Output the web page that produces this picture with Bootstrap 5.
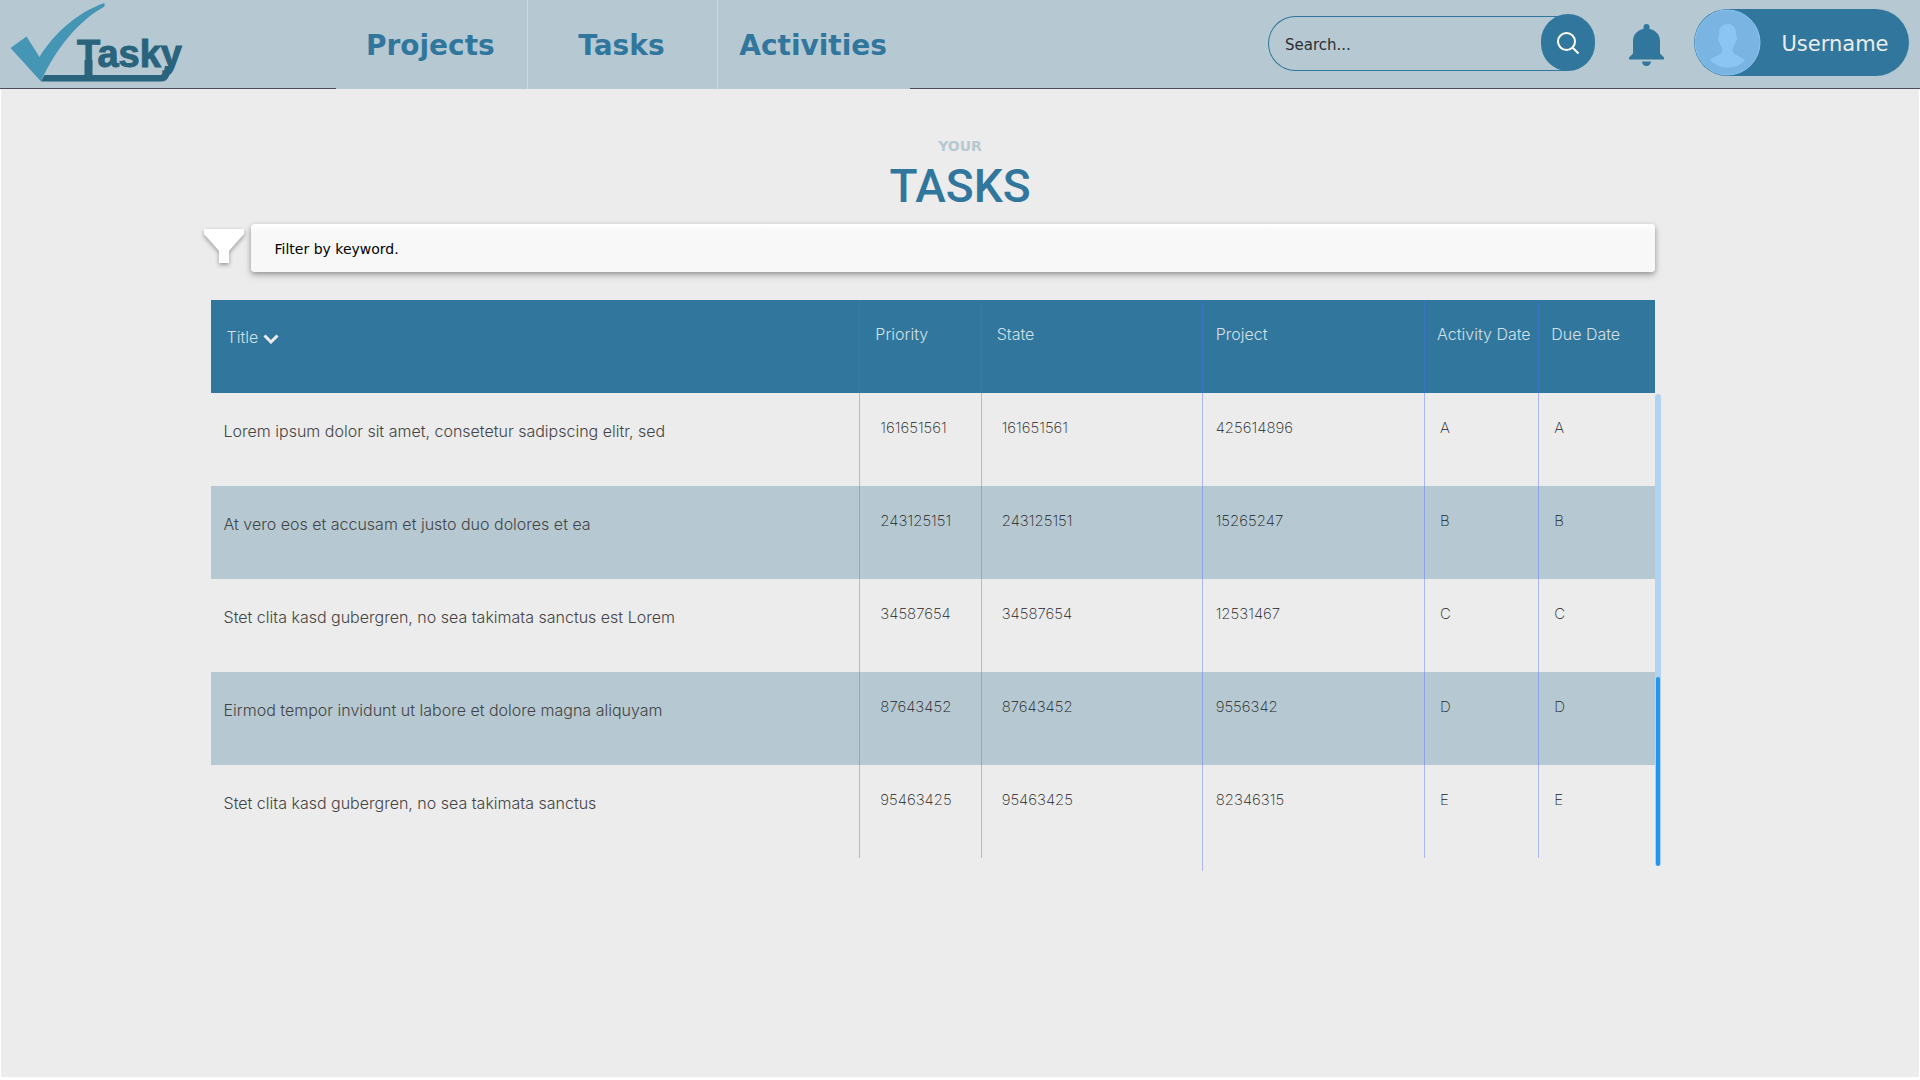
<!DOCTYPE html>
<html lang="en">
<head>
<meta charset="utf-8">
<meta name="viewport" content="width=device-width, initial-scale=1">
<title>Tasky - Your Tasks</title>
<link href="https://cdn.jsdelivr.net/npm/bootstrap@5.3.0/dist/css/bootstrap.min.css" rel="stylesheet">
<style>
  :root { --ink: #31769c; --mist: #b6c9d2; --paper: #ececec; }
  html { background: #fff; }
  body {
    font-family: "DejaVu Sans", sans-serif;
    min-height: 100vh;
    background: #fff;
  }
  .topbar { height: 89px; background: var(--mist); border-bottom: 1px solid #4d4c5a; }
  .brand-slot { width: 17.5vw; padding-left: 10px; }
  .main-nav { width: 29.9vw; height: 89px; background: var(--mist); }
  .main-nav a {
    color: var(--ink); font-size: 28px; font-weight: 700; line-height: 36px;
    text-decoration: none; width: 33.2%; padding: 2px 2px 0 0;
  }
  .main-nav a:last-child { flex: 1 1 0; }
  .main-nav a + a { border-left: 1px solid #d3d8de; }
  .tools { padding: 0 11px 3px 0; }
  .search-form { width: 327px; height: 57px; }
  .search-form input {
    height: 55px; border: 1px solid var(--ink); border-right: 0; border-radius: 28px 0 0 28px;
    background: transparent; color: #2b2f33; font-size: 15px; padding: 2px 16px 0; margin-right: -27px; margin-top: 2px;
  }
  .search-form input::placeholder, .filter-box::placeholder { color: inherit; opacity: 1; }
  .search-form input:focus { background: transparent; }
  .round-btn { width: 54px; height: 57px; border-radius: 27px; background: var(--ink); flex: none; z-index: 6; }
  .bell-btn { margin-left: 34px; padding-top: 4px; }
  .user-pill {
    margin-left: 30px; width: 215px; height: 67px; border-radius: 34px;
    background: var(--ink); color: #ececec; font-size: 21px;
  }
  .user-pill span { padding-top: 4px; }
  .sheet { background: var(--paper); margin: 0 1px 3px; min-height: calc(100vh - 92px); padding: 46px 13.75vw 0 10.55vw; }
  .headings { margin: 0 -13.75vw 0 -10.55vw; }
  .eyebrow { color: var(--mist); font-size: 14px; font-weight: 700; line-height: 22px; }
  .page-title { color: var(--ink); font-family: Roboto, sans-serif; font-weight: 500; font-size: 46px; line-height: 58px; }
  .filter-row { margin-top: 9px; }
  .funnel { filter: drop-shadow(0 2px 2px rgba(0,0,0,.35)); }
  .filter-box {
    height: 48px; border: 0; border-radius: 4px; padding: 2px 24px 0; font-size: 14px; color: #000;
    background: linear-gradient(#fff, #f8f8f8 8px);
    box-shadow: 0 2px 5px rgba(0,0,0,.3), 0 4px 10px rgba(0,0,0,.12);
  }
  .board { margin: 28px 0 0 7px; }
  .task-table { table-layout: fixed; font-family: Inter, sans-serif; font-weight: 200; font-size: 15px; line-height: 20px; color: #222; }
  .task-table th, .task-table td { height: 93px; padding: 25px 0 0 20px; vertical-align: top; white-space: nowrap; }
  .task-table th { font-size: 16px; font-weight: 300; color: #d3e0e8; background: var(--ink); padding: 24px 0 0 15px; }
  .task-table td.c-title { font-size: 16px; font-weight: 300; color: #444; padding: 28px 0 0 13px; }
  .task-table th.c-title { padding-left: 16px; padding-top: 27px; }
  .task-table .c-proj { padding-left: 13px; }
  .task-table .c-date { padding-left: 15px; }
  .task-table th.c-date { padding-left: 12px; }
  .task-table th + th, .task-table td + td { border-left: 1px solid rgba(76,111,255,.4); }
  .task-table tbody tr:nth-child(even) { background: var(--mist); }
  .sort-btn { color: inherit; font: inherit; background: none; border: 0; padding: 0; }
  .c1 { width: 44.95%; } .c2 { width: 8.4%; } .c3 { width: 15.3%; } .c4 { width: 15.4%; } .c5 { width: 7.9%; }
  .line-tail { left: 68.65%; top: 100%; width: 1px; height: 13px; background: rgba(76,111,255,.4); }
  .track { left: 100%; top: 94px; bottom: -8px; width: 6px; border-radius: 3px; background: #afd3f1; }
  .thumb { bottom: 0; left: 1px; width: 4px; height: 40%; border-radius: 2px; background: #2196f3; }
</style>
<script src="https://cdn.jsdelivr.net/npm/bootstrap@5.3.0/dist/js/bootstrap.bundle.min.js"></script>
</head>
<body>
<header class="topbar d-flex align-items-start">
  <a class="brand-slot d-block" href="#" aria-label="Tasky home">
    <svg width="190" height="88" viewBox="10 0 190 88">
      <path d="M41 81.500 L44.500 75 H160 Q163 75 164 71 L165 66 H172 L169 76 Q167 81.500 161 81.500 Z" fill="#29637c"/>
      <path d="M84.500 60 H92.500 V78 H84.500 Z" fill="#29637c"/>
      <text x="77" y="67" font-family="'Liberation Sans', sans-serif" font-weight="700" font-size="38" fill="#29637c" stroke="#29637c" stroke-width="1">Tasky</text>
      <path d="M10.500 48 L26.500 36.500 L39.500 57 C54 33 78 12 104.500 3 V6.500 C78 21 55 50 41 81.500 Z" fill="#4595b5"/>
    </svg>
  </a>
  <nav class="main-nav d-flex">
    <a class="d-flex align-items-center justify-content-center" href="#">Projects</a>
    <a class="d-flex align-items-center justify-content-center" href="#">Tasks</a>
    <a class="d-flex align-items-center justify-content-center" href="#">Activities</a>
  </nav>
  <div class="tools d-flex align-items-center ms-auto h-100">
    <form class="search-form d-flex" role="search">
      <input class="form-control shadow-none" type="text" placeholder="Search..." aria-label="Search">
      <button class="round-btn btn border-0 p-0 d-flex align-items-center justify-content-center position-relative" type="button" aria-label="Run search">
        <svg width="24" height="24" viewBox="0 0 24 24" fill="none" stroke="#fff" stroke-width="2"><circle cx="10.500" cy="10.500" r="8.500"/><path d="M16.500 16.500 L22.500 22.500"/></svg>
      </button>
    </form>
    <button class="bell-btn btn border-0 px-0 pb-0" type="button" aria-label="Notifications">
      <svg class="d-block" width="35" height="42" viewBox="0 0 35 42" fill="#31769c"><path d="M14.500 5 V3 A3 3 0 0 1 20.500 3 V5 C27 6 31 11 31 17 V29.500 L35 33.500 V35.500 H0 V33.500 L4 29.500 V17 C4 11 8 6 14.500 5 Z M13 37.500 H22 A4.500 4.500 0 0 1 13 37.500 Z"/></svg>
    </button>
    <button class="user-pill btn border-0 p-0 d-flex align-items-center" type="button">
      <svg class="flex-shrink-0" width="67" height="67" viewBox="0 0 67 67"><circle cx="33.500" cy="33.500" r="32.500" fill="#7ab4e2" stroke="#8bc5f5"/><path d="M25 24 C25 12 42 12 42 24 V27 C44 28 43 32 41.500 33 C41 37 38.500 38 38.500 42 C39 46 47 47 51 51 C43 61 24 61 16 51 C20 47 28 46 28.500 42 C28.500 38 26 37 25.500 33 C24 32 23 28 25 27 Z" fill="#8bc5f3"/></svg>
      <span class="flex-fill text-center">Username</span>
    </button>
  </div>
</header>
<main class="sheet">
  <div class="headings text-center">
    <div class="eyebrow">YOUR</div>
    <h1 class="page-title mb-0">TASKS</h1>
  </div>
  <div class="filter-row d-flex">
    <svg class="funnel flex-shrink-0 mt-1" width="47" height="40" viewBox="0 0 47 40" fill="#fff"><path d="M0 1 H40 V6 L25 23 V35 H15 V23 L0 6 Z"/></svg>
    <input class="filter-box form-control" type="text" placeholder="Filter by keyword." aria-label="Filter by keyword">
  </div>
  <div class="board position-relative">
    <table class="task-table w-100">
      <colgroup><col class="c1"><col class="c2"><col class="c3"><col class="c4"><col class="c5"><col></colgroup>
      <thead>
        <tr>
          <th class="c-title"><button class="sort-btn" type="button">Title <svg width="16" height="10" viewBox="0 0 16 10" fill="none" stroke="#ececec" stroke-width="3"><path d="M1.500 1.500 L8 8 L14.500 1.500"/></svg></button></th>
          <th>Priority</th><th>State</th><th class="c-proj">Project</th><th class="c-date">Activity Date</th><th class="c-date">Due Date</th>
        </tr>
      </thead>
      <tbody>
        <tr><td class="c-title">Lorem ipsum dolor sit amet, consetetur sadipscing elitr, sed</td><td>161651561</td><td>161651561</td><td class="c-proj">425614896</td><td class="c-date">A</td><td class="c-date">A</td></tr>
        <tr><td class="c-title">At vero eos et accusam et justo duo dolores et ea</td><td>243125151</td><td>243125151</td><td class="c-proj">15265247</td><td class="c-date">B</td><td class="c-date">B</td></tr>
        <tr><td class="c-title">Stet clita kasd gubergren, no sea takimata sanctus est Lorem</td><td>34587654</td><td>34587654</td><td class="c-proj">12531467</td><td class="c-date">C</td><td class="c-date">C</td></tr>
        <tr><td class="c-title">Eirmod tempor invidunt ut labore et dolore magna aliquyam</td><td>87643452</td><td>87643452</td><td class="c-proj">9556342</td><td class="c-date">D</td><td class="c-date">D</td></tr>
        <tr><td class="c-title">Stet clita kasd gubergren, no sea takimata sanctus</td><td>95463425</td><td>95463425</td><td class="c-proj">82346315</td><td class="c-date">E</td><td class="c-date">E</td></tr>
      </tbody>
    </table>
    <div class="line-tail position-absolute"></div>
    <div class="track position-absolute"><div class="thumb position-absolute"></div></div>
  </div>
</main>
</body>
</html>
